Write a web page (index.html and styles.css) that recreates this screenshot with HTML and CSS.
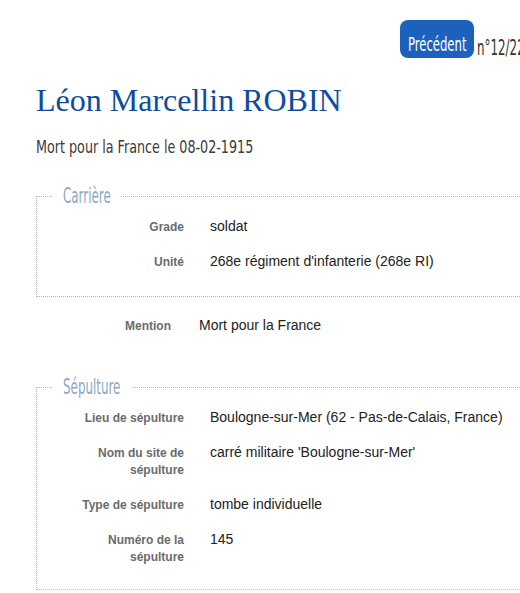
FILE: index.html
```html
<!DOCTYPE html>
<html>

<head>
    <title>Léon Marcellin ROBIN</title>
    <link rel="stylesheet" href="styles.css">
</head>

<body>
    <div class="page">
        <div class="pager">
            <a class="btn-prev"><span class="narrow">Précédent</span></a>
            <span class="count"><span class="narrow">n°12/22</span></span>
        </div>

        <h1 class="name">Léon Marcellin ROBIN</h1>
        <h2 class="death"><span class="narrow">Mort pour la France le 08-02-1915</span></h2>

        <fieldset class="group">
            <legend class="legend-career"><span class="narrow">Carrière</span></legend>
            <dl class="fields">
                <dt>Grade</dt>
                <dd>soldat</dd>
                <dt>Unité</dt>
                <dd>268e régiment d'infanterie (268e RI)</dd>
            </dl>
        </fieldset>

        <dl class="fields mention">
            <dt>Mention</dt>
            <dd>Mort pour la France</dd>
        </dl>

        <fieldset class="group burial">
            <legend class="legend-burial"><span class="narrow">Sépulture</span></legend>
            <dl class="fields">
                <dt>Lieu de sépulture</dt>
                <dd>Boulogne-sur-Mer (62 - Pas-de-Calais, France)</dd>
                <dt>Nom du site de sépulture</dt>
                <dd>carré militaire 'Boulogne-sur-Mer'</dd>
                <dt>Type de sépulture</dt>
                <dd>tombe individuelle</dd>
                <dt>Numéro de la sépulture</dt>
                <dd>145</dd>
            </dl>
        </fieldset>
    </div>
</body>

</html>
```

FILE: styles.css
```css
html, body {
    margin: 0;
    overflow: hidden;
    background: #fff;
}

.page {
    width: 640px;
    padding-left: 36px;
    font-family: "Liberation Sans", Arial, sans-serif;
}

/* condensed titles: no narrow font installed, so squeeze DejaVu */
.btn-prev, .count, .death, .group legend {
    font-family: "DejaVu Sans Condensed", "DejaVu Sans", sans-serif;
    font-stretch: condensed;
    white-space: nowrap;
}

.narrow {
    display: inline-block;
    transform: scaleX(0.786);
    transform-origin: 0 50%;
}

.pager {
    display: flex;
    padding-left: 364px;
    padding-top: 20px;
}

.btn-prev {
    display: flex;
    align-items: center;
    justify-content: center;
    box-sizing: border-box;
    width: 74px;
    height: 38px;
    padding-top: 10px;
    border-radius: 8px;
    background-color: #1c62bd;
    color: #fff;
    font-size: 20px;
}

.btn-prev .narrow {
    transform: scaleX(0.646);
    transform-origin: 50% 50%;
}

.count {
    align-self: flex-end;
    margin-left: 3px;
    margin-bottom: -1px;
    color: #333;
    font-size: 22px;
    line-height: 22px;
}

.count .narrow {
    transform: scaleX(0.6);
}

.name {
    margin: 22px 0 0;
    color: #0e4c9e;
    font-family: "Liberation Serif", "Times New Roman", serif;
    font-size: 32px;
    font-weight: normal;
    line-height: 40px;
}

.death {
    margin: 14px 0 0;
    color: #3a3a3a;
    font-size: 18px;
    font-weight: normal;
    line-height: 26px;
}

.group {
    margin: 23px 0 0;
    padding: 0 0 17px 0;
    border: 1px dotted #b5b5b5;
}

.group legend {
    margin-left: 16px;
    padding: 0 10px;
    color: #8ba7c7;
    font-size: 21px;
    line-height: 26px;
}

.group legend .narrow {
    transform: scaleX(0.63);
}

.legend-career {
    width: 48px;
}

.legend-burial {
    width: 59px;
}

.fields {
    display: grid;
    grid-template-columns: 120px 1fr;
    column-gap: 26px;
    margin: 0;
    padding-left: 27px;
}

.fields dt {
    padding: 10px 0 8px;
    color: #6b6b6b;
    font-size: 12px;
    font-weight: bold;
    line-height: 17px;
    text-align: right;
}

.fields dd {
    margin: 0;
    padding: 9px 0;
    color: #222;
    font-size: 14px;
    line-height: 17px;
}

.mention {
    margin-top: 11px;
    padding-left: 15px;
    column-gap: 28px;
}

.burial {
    margin-top: 31px;
}

.burial .fields {
    margin-bottom: -2px;
}
```
